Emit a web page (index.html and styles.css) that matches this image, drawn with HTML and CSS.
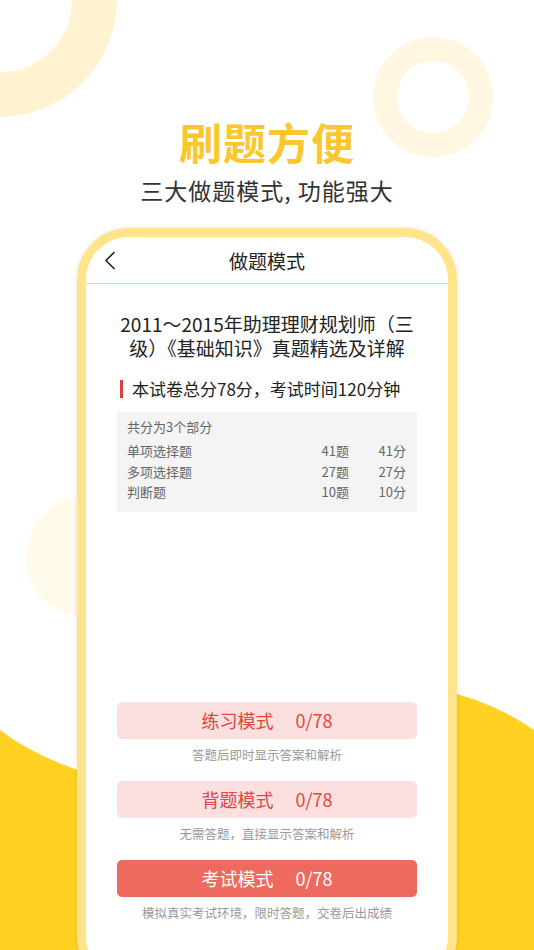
FILE: index.html
```html
<!DOCTYPE html>
<html lang="zh-CN">
  <head>
    <meta charset="UTF-8" />
    <meta name="viewport" content="width=device-width, initial-scale=1.0" />
    <title>刷题方便</title>
    <link rel="stylesheet" href="styles.css">
  </head>
  <body>
    <!-- decorative background -->
    <svg class="backdrop" width="534" height="950" viewBox="0 0 534 950">
      <circle cx="0" cy="0" r="94.5" fill="none" stroke="#fff3d2" stroke-width="45" />
      <circle cx="433" cy="97" r="48" fill="none" stroke="#fff7e1" stroke-width="24" />
      <circle cx="86" cy="557" r="60" fill="#fffaea" />
      <path
        d="M0,730 Q35,757 90,774 L440,690 Q490,700 534,730 L534,950 L0,950 Z"
        fill="#fed123"
      />
    </svg>

    <div class="page">
      <header class="hero">
        <h1>刷题方便</h1>
        <p class="subtitle">三大做题模式, 功能强大</p>
      </header>

      <div class="phone">
        <div class="screen">
          <div class="nav">
            <span class="back">
              <svg width="12" height="19" viewBox="0 0 12 19">
                <path d="M10.5 1 L2 9.5 L10.5 18" fill="none" stroke="#222" stroke-width="1.6" />
              </svg>
            </span>
            <span class="nav-title">做题模式</span>
            <span></span>
          </div>

          <div class="content">
            <h2 class="paper-title">2011～2015年助理理财规划师（三<br />级）《基础知识》真题精选及详解</h2>

            <p class="paper-info">本试卷总分78分，考试时间120分钟</p>

            <div class="parts">
              <p class="parts-head">共分为3个部分</p>
              <div class="part-row">
                <span>单项选择题</span><span class="num">41题</span><span class="num">41分</span>
              </div>
              <div class="part-row">
                <span>多项选择题</span><span class="num">27题</span><span class="num">27分</span>
              </div>
              <div class="part-row">
                <span>判断题</span><span class="num">10题</span><span class="num">10分</span>
              </div>
            </div>

            <div class="modes">
              <div class="mode">
                <div class="mode-btn"><span>练习模式</span><span>0/78</span></div>
                <p class="mode-desc">答题后即时显示答案和解析</p>
              </div>
              <div class="mode">
                <div class="mode-btn"><span>背题模式</span><span>0/78</span></div>
                <p class="mode-desc">无需答题，直接显示答案和解析</p>
              </div>
              <div class="mode">
                <div class="mode-btn solid"><span>考试模式</span><span>0/78</span></div>
                <p class="mode-desc">模拟真实考试环境，限时答题，交卷后出成绩</p>
              </div>
            </div>
          </div>
        </div>
      </div>
    </div>
  </body>
</html>
```

FILE: styles.css
```css
* {
  margin: 0;
  padding: 0;
  box-sizing: border-box;
}

body {
  font-family: "Noto Sans CJK SC", "Noto Sans", sans-serif;
  width: 534px;
  height: 950px;
  overflow: hidden;
  position: relative;
  background-color: #fff;
  color: #222;
}

.backdrop {
  position: absolute;
  top: 0;
  left: 0;
  z-index: 0;
}

.page {
  position: relative;
  z-index: 1;
}

.hero {
  padding-top: 115px;
  text-align: center;
}

.hero h1 {
  font-size: 43px;
  line-height: 52px;
  font-weight: 700;
  color: #fac82e;
  letter-spacing: 1px;
}

.subtitle {
  margin-top: 8px;
  font-size: 23px;
  line-height: 30px;
  color: #333;
  letter-spacing: 1px;
}

.phone {
  margin: 23px auto 0;
  width: 380px;
  height: 760px;
  border: 9px solid #ffe48b;
  border-radius: 52px;
  box-shadow: 0 0 5px rgba(0, 0, 0, 0.1);
  background-color: #fff;
  overflow: hidden;
}

.screen {
  height: 100%;
}

.nav {
  display: grid;
  grid-template-columns: 1fr auto 1fr;
  align-items: center;
  height: 47px;
  border-bottom: 1px solid #f1cccc;
}

.back {
  padding-left: 18px;
  display: flex;
  align-items: center;
}

.nav-title {
  font-size: 19px;
  color: #222;
}

.content {
  padding: 0 31px;
}

.paper-title {
  margin-top: 28px;
  font-size: 19px;
  line-height: 24px;
  font-weight: 400;
  text-align: center;
  white-space: nowrap;
  color: #222;
}

.paper-info {
  margin-top: 19px;
  padding-left: 3px;
  display: flex;
  align-items: center;
  gap: 9px;
  font-size: 17px;
  line-height: 20px;
  color: #222;
}

.paper-info::before {
  content: "";
  width: 3px;
  height: 18px;
  background-color: #d9433a;
}

.parts {
  margin-top: 13px;
  padding: 5px 11px 9px 10px;
  background-color: #f4f4f4;
  font-size: 13px;
  color: #666;
}

.parts-head {
  line-height: 20px;
  margin-bottom: 4px;
}

.part-row {
  display: grid;
  grid-template-columns: 1fr 60px 57px;
  line-height: 20.5px;
}

.part-row .num {
  text-align: right;
}

.modes {
  margin-top: 190px;
  display: flex;
  flex-direction: column;
  gap: 18px;
}

.mode-btn {
  height: 37px;
  border-radius: 5px;
  background-color: #fbe0df;
  color: #e2463c;
  font-size: 18px;
  display: flex;
  justify-content: center;
  align-items: center;
  gap: 22px;
}

.mode-btn.solid {
  background-color: #ee6a5f;
  color: #fff;
}

.mode-desc {
  margin-top: 8px;
  font-size: 12.5px;
  line-height: 16px;
  text-align: center;
  color: #999;
}
```
